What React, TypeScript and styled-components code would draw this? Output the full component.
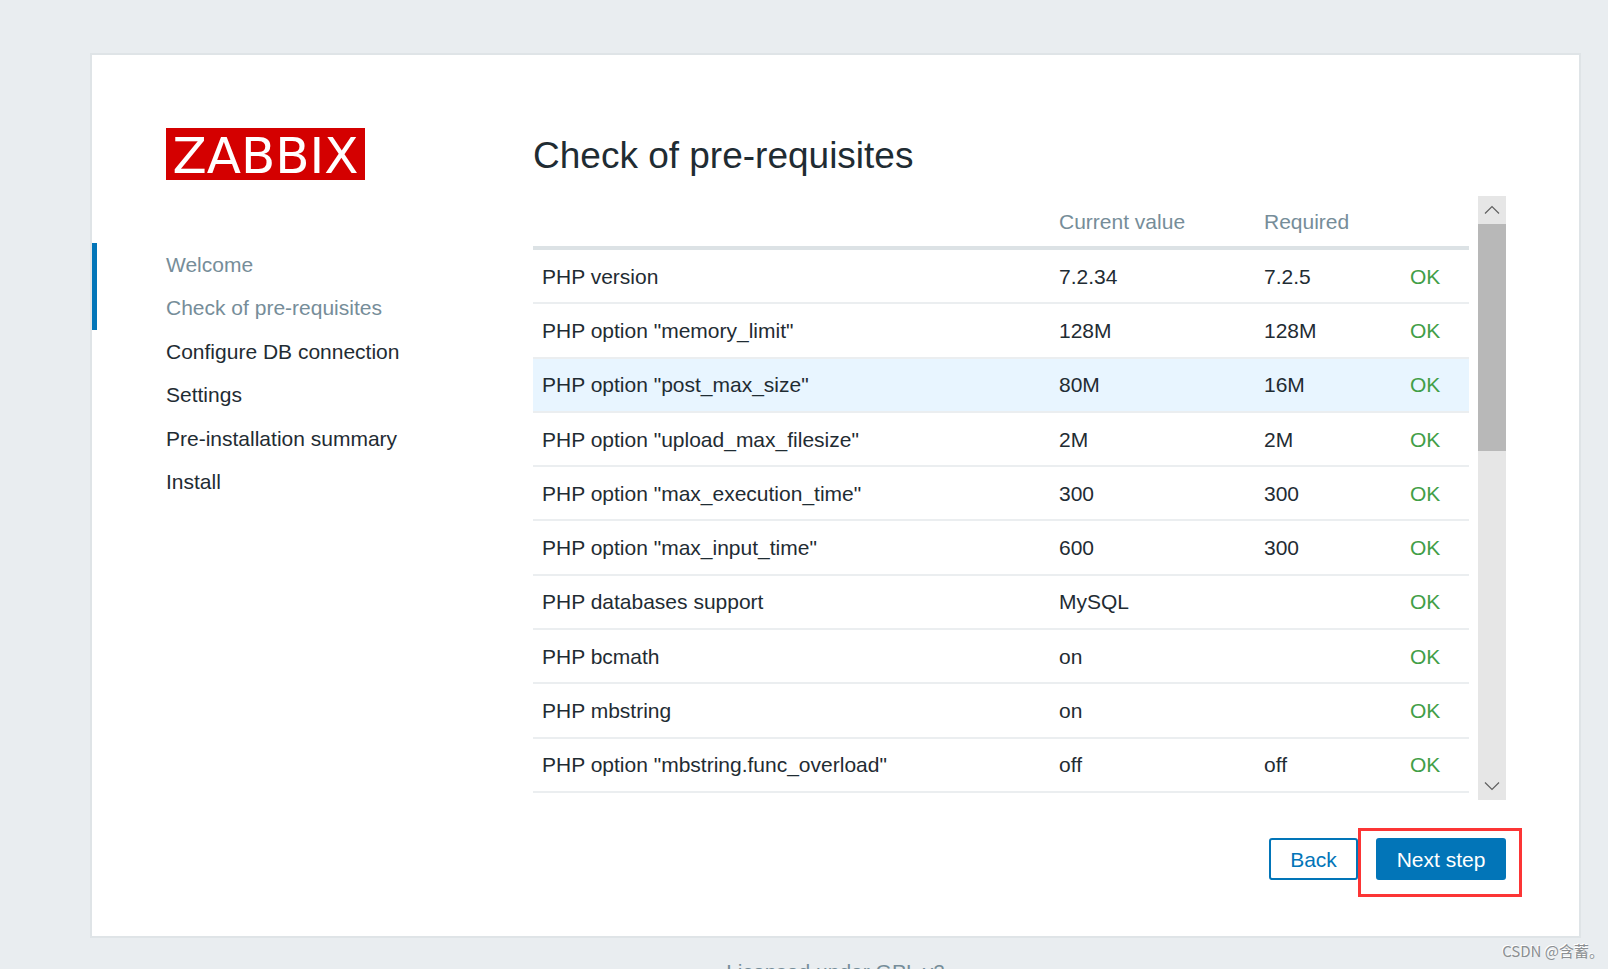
import React from "react";
import styled, { createGlobalStyle } from "styled-components";

const GlobalStyle = createGlobalStyle`
  * { box-sizing: border-box; }
  body {
    margin: 0;
    background: #e9edf0;
    color: #1f2c33;
    font: 21px/24px "Liberation Sans", Arial, sans-serif;
  }
`;

const Page = styled.div`
  position: relative;
  height: 100vh;
  overflow: hidden;
  padding: 53px 27px 0 90px;
`;

const Card = styled.main`
  display: grid;
  grid-template-columns: 441px minmax(0, 1fr);
  padding: 73px 73px 56px 0;
  background: #fff;
  border: 2px solid #dfe4e7;
`;

const Sidebar = styled.aside`
  display: flex;
  flex-direction: column;
  align-items: flex-start;
`;

const Logo = styled.div`
  width: 199px;
  height: 52px;
  margin: 0 0 63px 74px;
  background: #d40000;
  color: #fff;
  font: 50px/56px "DejaVu Sans", Verdana, sans-serif;
  text-align: center;
`;

const Steps = styled.ol`
  display: grid;
  grid-auto-rows: 1fr;
  height: 261px;
  margin: 0;
  padding: 0;
  list-style: none;
`;

const Step = styled.li<{ $reached?: boolean }>`
  display: flex;
  align-items: center;
  padding-left: ${(p) => (p.$reached ? 69 : 74)}px;
  border-left: ${(p) => (p.$reached ? "5px solid #0275b8" : "0")};
  color: ${(p) => (p.$reached ? "#768d99" : "inherit")};
`;

const Content = styled.section`
  display: flex;
  flex-direction: column;
  padding-top: 7px;
`;

const Title = styled.h1`
  margin: 0 0 19px;
  font-size: 37px;
  line-height: 42px;
  font-weight: 400;
`;

const ScrollArea = styled.div`
  display: flex;
  align-items: flex-start;
  gap: 9px;
  height: 604px;
`;

const Table = styled.table`
  flex: 1;
  height: 597px;
  table-layout: fixed;
  border-spacing: 0;
`;

const Col = styled.col<{ $width?: number }>`
  width: ${(p) => (p.$width ? `${p.$width}px` : "auto")};
`;

const HeadCell = styled.th`
  height: 54px;
  padding: 1px 9px 0;
  border-bottom: 4px solid #dce2e5;
  color: #768d99;
  font-weight: 400;
  text-align: left;
`;

const Row = styled.tr<{ $active?: boolean }>`
  background: ${(p) => (p.$active ? "#e8f5ff" : "transparent")};
`;

const Cell = styled.td<{ $ok?: boolean }>`
  padding: 1px 9px 0;
  border-bottom: 2px solid #ebeef0;
  color: ${(p) => (p.$ok ? "#429e47" : "inherit")};
`;

const Scrollbar = styled.div`
  display: flex;
  flex-direction: column;
  width: 28px;
  height: 100%;
  background: #e6e6e6;
`;

const Thumb = styled.div`
  height: 227px;
  margin-bottom: auto;
  background: #b8b8b8;
`;

const Arrow = styled.button`
  display: flex;
  align-items: center;
  justify-content: center;
  width: 28px;
  height: 28px;
  padding: 0;
  border: 0;
  background: transparent;
`;

const Actions = styled.div`
  display: flex;
  justify-content: flex-end;
  gap: 18px;
  margin-top: 38px;
`;

const Button = styled.button<{ $primary?: boolean }>`
  width: ${(p) => (p.$primary ? 130 : 89)}px;
  height: 42px;
  padding: 2px 0 0;
  border: 2px solid #0275b8;
  border-radius: 3px;
  background: ${(p) => (p.$primary ? "#0275b8" : "#fff")};
  color: ${(p) => (p.$primary ? "#fff" : "#0275b8")};
  font: inherit;
`;

const Marked = styled.div`
  position: relative;
`;

const Marker = styled.div`
  position: absolute;
  inset: -10px -16px -17px -18px;
  border: 3px solid #fc3535;
  pointer-events: none;
`;

const Footer = styled.footer`
  margin-top: 22px;
  color: #768d99;
  text-align: center;
`;

const Watermark = styled.div`
  position: absolute;
  right: 4px;
  bottom: 6px;
  color: #8b8f92;
  font: 15px/24px "Noto Sans CJK SC", sans-serif;
  text-shadow: -1px -1px 0 #fff;
  white-space: nowrap;
`;

const steps = [
  "Welcome",
  "Check of pre-requisites",
  "Configure DB connection",
  "Settings",
  "Pre-installation summary",
  "Install",
];

const checks = [
  ["PHP version", "7.2.34", "7.2.5"],
  ['PHP option "memory_limit"', "128M", "128M"],
  ['PHP option "post_max_size"', "80M", "16M"],
  ['PHP option "upload_max_filesize"', "2M", "2M"],
  ['PHP option "max_execution_time"', "300", "300"],
  ['PHP option "max_input_time"', "600", "300"],
  ["PHP databases support", "MySQL", ""],
  ["PHP bcmath", "on", ""],
  ["PHP mbstring", "on", ""],
  ['PHP option "mbstring.func_overload"', "off", "off"],
];

const Chevron = ({ d }: { d: string }) => (
  <svg width="16" height="10" viewBox="0 0 16 10" fill="none" stroke="#606060" strokeWidth="1.2">
    <path d={d} />
  </svg>
);

export default function App() {
  return (
    <>
      <GlobalStyle />
      <Page>
        <Card>
          <Sidebar>
            <Logo>ZABBIX</Logo>
            <Steps>
              {steps.map((name, i) => (
                <Step key={name} $reached={i < 2}>
                  {name}
                </Step>
              ))}
            </Steps>
          </Sidebar>
          <Content>
            <Title>Check of pre-requisites</Title>
            <ScrollArea>
              <Table>
                <colgroup>
                  <Col />
                  <Col $width={205} />
                  <Col $width={146} />
                  <Col $width={68} />
                </colgroup>
                <thead>
                  <tr>
                    <HeadCell />
                    <HeadCell scope="col">Current value</HeadCell>
                    <HeadCell scope="col">Required</HeadCell>
                    <HeadCell />
                  </tr>
                </thead>
                <tbody>
                  {checks.map(([name, current, required], i) => (
                    <Row key={name} $active={i === 2}>
                      <Cell>{name}</Cell>
                      <Cell>{current}</Cell>
                      <Cell>{required}</Cell>
                      <Cell $ok>OK</Cell>
                    </Row>
                  ))}
                </tbody>
              </Table>
              <Scrollbar>
                <Arrow type="button" aria-label="Scroll up">
                  <Chevron d="M1 8.5 L8 1.5 L15 8.5" />
                </Arrow>
                <Thumb />
                <Arrow type="button" aria-label="Scroll down">
                  <Chevron d="M1 1.5 L8 8.5 L15 1.5" />
                </Arrow>
              </Scrollbar>
            </ScrollArea>
            <Actions>
              <Button type="button">Back</Button>
              <Marked>
                <Button type="button" $primary>
                  Next step
                </Button>
                <Marker />
              </Marked>
            </Actions>
          </Content>
        </Card>
        <Footer>Licensed under GPL v2</Footer>
        <Watermark>CSDN @含蓄。</Watermark>
      </Page>
    </>
  );
}
